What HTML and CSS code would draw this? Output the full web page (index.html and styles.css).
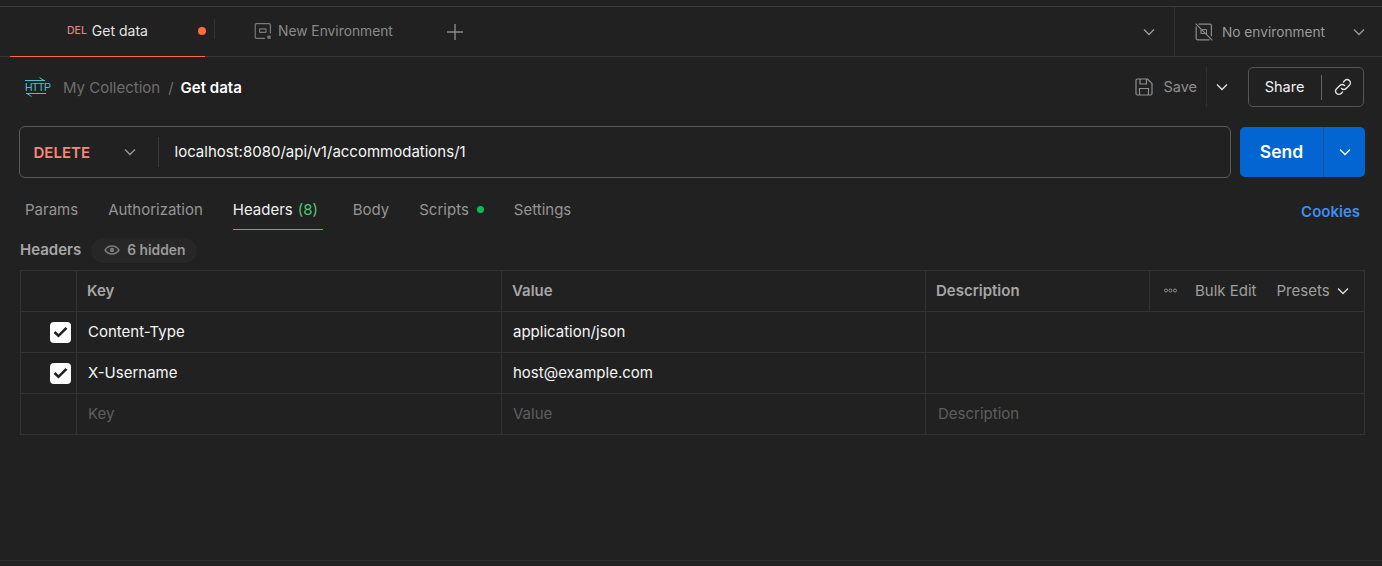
FILE: index.html
```html
<!DOCTYPE html>
<html lang="en">
<head>
<meta charset="UTF-8" />
<title>Get data</title>
<link rel="stylesheet" href="styles.css">
</head>
<body>
<div class="tabbar">
    <div class="tab tab-active">
        <span class="tab-method">DEL</span>
        <span class="tab-name">Get data</span>
        <span class="tab-dot"></span>
    </div>
    <div class="tab-env">
        <svg width="18" height="18" viewBox="0 0 18 18" fill="none" stroke="#7a7a7a" stroke-width="1.2"><path d="M11 16.4H2.6a1.4 1.4 0 0 1-1.4-1.4V3a1.4 1.4 0 0 1 1.4-1.4H15A1.4 1.4 0 0 1 16.4 3v8.5"/><rect x="5.6" y="6.8" width="6.4" height="3.6" rx="0.6"/><rect x="13.4" y="13.6" width="3.2" height="3.2" fill="#7a7a7a" stroke="none"/></svg>
        <span>New Environment</span>
    </div>
    <div class="tab-add">
        <svg width="16" height="16" viewBox="0 0 16 16" stroke="#8a8a8a" stroke-width="1.4"><path d="M8 0v16M0 8h16"/></svg>
    </div>
    <div class="tabbar-right">
        <div class="tab-more">
            <svg class="chev" width="12" height="8" viewBox="0 0 12 8"><path d="M1 1.5l5 5 5-5"/></svg>
        </div>
        <div class="env-select">
            <svg width="18" height="18" viewBox="0 0 18 18" fill="none" stroke="#8a8a8a" stroke-width="1.2"><path d="M3.5 1.2H15a1.4 1.4 0 0 1 1.4 1.4v10.6M14.6 16.8H2.6A1.4 1.4 0 0 1 1.2 15.4V3.4"/><path d="M0.6 0.6L17.4 17.4"/><rect x="6" y="6.5" width="5.5" height="4" rx="0.6"/></svg>
            <span class="env-name">No environment</span>
            <svg class="chev" width="12" height="8" viewBox="0 0 12 8"><path d="M1 1.5l5 5 5-5"/></svg>
        </div>
    </div>
</div>

<div class="toolbar">
    <div class="crumbs">
        <span class="http-icon">
            <svg width="21" height="5" viewBox="0 0 21 5" fill="none" stroke="#3cc8d8" stroke-width="1"><path d="M0 3.5h20M14.5 0.5l4.5 3"/></svg>
            <span class="http-text">HTTP</span>
            <svg width="21" height="5" viewBox="0 0 21 5" fill="none" stroke="#3cc8d8" stroke-width="1"><path d="M1 1.5h20M6.5 4.5L2 1.5"/></svg>
        </span>
        <span class="crumb-parent">My Collection</span>
        <span class="crumb-sep">/</span>
        <span class="crumb-current">Get data</span>
    </div>
    <div class="toolbar-actions">
        <div class="save">
            <svg width="18" height="18" viewBox="0 0 18 18" fill="none" stroke="#8f8f8f" stroke-width="1.2"><path d="M2.5 1H12.5L17 5.5V15.5A1.5 1.5 0 0 1 15.5 17H2.5A1.5 1.5 0 0 1 1 15.5V2.5A1.5 1.5 0 0 1 2.5 1Z"/><path d="M5 1V6H11.5V1M4.5 17V10.5H13.5V17"/></svg>
            <span class="save-label">Save</span>
        </div>
        <div class="save-more">
            <svg class="chev chev-light" width="12" height="8" viewBox="0 0 12 8"><path d="M1 1.5l5 5 5-5"/></svg>
        </div>
        <div class="share">
            <span class="share-label">Share</span>
            <span class="share-link">
                <svg width="18" height="18" viewBox="0 0 18 18" fill="none" stroke="#e0e0e0" stroke-width="1.4" stroke-linecap="round"><path d="M7.5 10.5a3.2 3.2 0 0 0 4.6 0l3.3-3.3a3.25 3.25 0 0 0-4.6-4.6L9.5 3.9"/><path d="M10.5 7.5a3.2 3.2 0 0 0-4.6 0l-3.3 3.3a3.25 3.25 0 0 0 4.6 4.6l1.3-1.3"/></svg>
            </span>
        </div>
    </div>
</div>

<div class="request">
    <div class="url-box">
        <div class="method">
            <span class="method-name">DELETE</span>
            <svg class="chev" width="12" height="8" viewBox="0 0 12 8"><path d="M1 1.5l5 5 5-5"/></svg>
        </div>
        <div class="url">localhost:8080/api/v1/accommodations/1</div>
    </div>
    <div class="send">
        <span class="send-label">Send</span>
        <span class="send-more">
            <svg class="chev chev-white" width="12" height="8" viewBox="0 0 12 8"><path d="M1 1.5l5 5 5-5"/></svg>
        </span>
    </div>
</div>

<div class="req-tabs">
    <span class="req-tab">Params</span>
    <span class="req-tab">Authorization</span>
    <span class="req-tab req-tab-active">Headers <span class="count">(8)</span></span>
    <span class="req-tab">Body</span>
    <span class="req-tab">Scripts <span class="green-dot"></span></span>
    <span class="req-tab">Settings</span>
    <span class="cookies">Cookies</span>
</div>

<div class="headers-label">
    <span class="headers-title">Headers</span>
    <span class="hidden-pill">
        <svg width="16" height="10" viewBox="0 0 16 10" fill="none" stroke="#7c7c7c" stroke-width="1.4"><path d="M1 5c1.8-2.7 4.2-4 7-4s5.2 1.3 7 4c-1.8 2.7-4.2 4-7 4S2.8 7.7 1 5z"/><circle cx="8" cy="5" r="2.2" fill="#7c7c7c" stroke="none"/></svg>
        6 hidden
    </span>
</div>

<div class="table">
    <div class="row row-head">
        <div class="cell cell-check"></div>
        <div class="cell cell-key">Key</div>
        <div class="cell cell-value">Value</div>
        <div class="cell cell-desc">Description</div>
        <div class="cell cell-tools">
            <svg width="13" height="5" viewBox="0 0 13 5" fill="none" stroke="#9a9a9a" stroke-width="0.9"><circle cx="2" cy="2.5" r="1.5"/><circle cx="6.5" cy="2.5" r="1.5"/><circle cx="11" cy="2.5" r="1.5"/></svg>
            <span class="bulk">Bulk Edit</span>
            <span class="presets">Presets
                <svg class="chev chev-light" width="12" height="8" viewBox="0 0 12 8"><path d="M1 1.5l5 5 5-5"/></svg>
            </span>
        </div>
    </div>
    <div class="row">
        <div class="cell cell-check"><span class="checkbox"><svg width="15" height="12" viewBox="0 0 15 12" fill="none" stroke="#212121" stroke-width="2.6"><path d="M1.5 6l4 3.8 8-8"/></svg></span></div>
        <div class="cell cell-key cell-text">Content-Type</div>
        <div class="cell cell-value cell-text">application/json</div>
        <div class="cell cell-wide"></div>
    </div>
    <div class="row">
        <div class="cell cell-check"><span class="checkbox"><svg width="15" height="12" viewBox="0 0 15 12" fill="none" stroke="#212121" stroke-width="2.6"><path d="M1.5 6l4 3.8 8-8"/></svg></span></div>
        <div class="cell cell-key cell-text">X-Username</div>
        <div class="cell cell-value cell-text">host@example.com</div>
        <div class="cell cell-wide"></div>
    </div>
    <div class="row">
        <div class="cell cell-check"></div>
        <div class="cell cell-key cell-text cell-empty">Key</div>
        <div class="cell cell-value cell-text cell-empty">Value</div>
        <div class="cell cell-wide cell-text cell-empty">Description</div>
    </div>
</div>

<div class="footer-line"></div>
</body>
</html>
```

FILE: styles.css
```css
/* Reset and base styles */
* {margin: 0; padding: 0; box-sizing: border-box;}
html, body {height: 100%;}
body {
    font-family: Inter, 'Noto Sans', sans-serif;
    background: #212121;
    color: #fff;
    font-size: 14px;
    height: 566px;
    overflow: hidden;
    position: relative;
    padding-top: 6px;
}
svg {display: block; flex: none;}
.chev {fill: none; stroke: #9a9a9a; stroke-width: 1.3;}
.chev-light {stroke: #e0e0e0;}
.chev-white {stroke: #fff;}

/* Top tab bar */
.tabbar {
    display: flex;
    height: 51px;
    border-top: 1px solid #3b3b3b;
    border-bottom: 1px solid #383838;
    align-items: stretch;
}
.tab {
    width: 195px;
    margin-left: 10px;
    display: flex;
    align-items: center;
    padding-left: 57px;
    padding-bottom: 2px;
    border-bottom: 1px solid #ff6c37;
    margin-bottom: -1px;
    position: relative;
}
.tab::after {
    content: "";
    position: absolute;
    right: -10px;
    top: 12px;
    height: 20px;
    width: 1px;
    background: #333;
}
.tab-method {
    font-size: 10.5px;
    font-weight: 500;
    color: #e2887f;
    margin-right: 5px;
}
.tab-name {color: #e4e4e4; font-size: 14px;}
.tab-dot {
    width: 8px;
    height: 8px;
    border-radius: 50%;
    background: #ff6c37;
    margin-left: auto;
    margin-right: -1px;
}
.tab-env {
    display: flex;
    align-items: center;
    gap: 6px;
    margin-left: 49px;
    padding-bottom: 1px;
    color: #8a8a8a;
    font-size: 13.8px;
}
.tab-add {
    display: flex;
    align-items: center;
    margin-left: 54px;
}
.tabbar-right {
    margin-left: auto;
    display: flex;
    align-items: stretch;
}
.tab-more {
    display: flex;
    align-items: center;
    padding-right: 19px;
}
.env-select {
    width: 208px;
    border-left: 1px solid #333;
    display: flex;
    align-items: center;
    padding-left: 20px;
}
.env-name {
    color: #9a9a9a;
    margin-left: 9px;
    font-size: 13.7px;
}
.env-select .chev {margin-left: auto; margin-right: 17px;}

/* Breadcrumb row */
.toolbar {
    display: flex;
    align-items: center;
    justify-content: space-between;
    height: 60px;
    padding: 0 18px 0 25px;
}
.crumbs {display: flex; align-items: center;}
.http-icon {
    display: flex;
    flex-direction: column;
    width: 21px;
    margin-right: 17px;
}
.http-text {
    font-size: 10.5px;
    line-height: 10px;
    color: #3cc8d8;
    letter-spacing: -0.5px;
    font-family: 'Liberation Sans', sans-serif;
}
.crumb-parent {color: #6e6e6e; font-size: 15px;}
.crumb-sep {color: #6e6e6e; margin: 0 7px 0 8px; font-size: 15px;}
.crumb-current {font-weight: 600; font-size: 15px;}
.toolbar-actions {display: flex; align-items: center;}
.save {
    display: flex;
    align-items: center;
    gap: 10px;
    color: #8f8f8f;
    font-size: 14.5px;
    padding: 0 9px 0 0;
    height: 40px;
    border-right: 1px solid #303030;
}
.save-label {padding-bottom: 2px;}
.save-more {
    display: flex;
    align-items: center;
    padding: 0 9px;
    margin-right: 11px;
}
.share {
    display: flex;
    align-items: center;
    height: 40px;
    width: 116px;
    border: 1px solid #555;
    border-radius: 5px;
}
.share-label {
    width: 73px;
    padding: 0 1px 2px 0;
    text-align: center;
    border-right: 1px solid #666;
    line-height: 23px;
    font-size: 14.5px;
    color: #f0f0f0;
}
.share-link {flex: 1; display: flex; justify-content: center;}

/* Method and url */
.request {
    display: flex;
    gap: 9px;
    padding: 0 17px 0 19px;
    margin-top: 9px;
}
.url-box {
    flex: 1;
    height: 52px;
    border: 1px solid #5a5a5a;
    border-radius: 6px;
    display: flex;
    align-items: center;
}
.method {
    width: 139px;
    height: 30px;
    display: flex;
    align-items: center;
    justify-content: space-between;
    padding: 0 22px 0 13.5px;
    border-right: 1px solid #3a3a3a;
}
.method-name {
    color: #f4897c;
    font-weight: 600;
    font-size: 15px;
}
.url {
    padding: 0 0 2px 15.5px;
    font-size: 15px;
    color: #f6f6f6;
}
.send {
    width: 125px;
    height: 50px;
    margin-top: 1px;
    background: #0265d2;
    border-radius: 5px;
    display: flex;
    align-items: stretch;
}
.send-label {
    width: 84px;
    padding-bottom: 2px;
    font-weight: 600;
    font-size: 17.5px;
    display: flex;
    align-items: center;
    justify-content: center;
    border-right: 1px solid #1c4f8c;
}
.send-more {flex: 1; display: flex; align-items: center; justify-content: center;}

/* Request tabs */
.req-tabs {
    display: flex;
    align-items: stretch;
    height: 43px;
    margin-top: 9px;
    padding: 0 22px 0 25px;
    gap: 30px;
}
.req-tab {
    color: #959595;
    font-size: 15px;
    display: flex;
    align-items: center;
    gap: 5px;
    padding-top: 3px;
    height: 43px;
    border-bottom: 1px solid transparent;
}
.req-tab-active {
    color: #f0f0f0;
    border-bottom-color: #ff6c37;
    width: 90px;
}
.count {color: #4fc67a;}
.green-dot {
    width: 7px;
    height: 7px;
    border-radius: 50%;
    background: #0cbb52;
    margin-left: 3px;
}
.cookies {
    margin-left: auto;
    color: #3f8ef0;
    font-weight: 600;
    font-size: 15px;
    display: flex;
    align-items: center;
    padding-top: 5px;
}

/* Headers label */
.headers-label {
    display: flex;
    align-items: center;
    height: 26px;
    margin-top: 7px;
    padding-left: 20px;
}
.headers-title {
    color: #a6a6a6;
    font-weight: 600;
    font-size: 15px;
    margin-right: 10px;
    padding-bottom: 2px;
}
.hidden-pill {
    display: flex;
    align-items: center;
    gap: 7px;
    height: 25px;
    padding: 0 12px 1px 13px;
    border-radius: 13px;
    background: #272727;
    color: #9a9a9a;
    font-weight: 600;
    font-size: 13.8px;
}

/* Headers table */
.table {
    margin: 7px 17px 0 20px;
    border: 1px solid #333;
    border-bottom: 0;
}
.row {
    display: grid;
    grid-template-columns: 56px 425px 424px 1fr;
    height: 41px;
    border-bottom: 1px solid #333;
}
.row-head {grid-template-columns: 56px 425px 424px 224px 1fr;}
.cell {
    display: flex;
    align-items: center;
    border-right: 1px solid #333;
    padding-left: 10px;
    padding-bottom: 1px;
    font-size: 15px;
}
.cell:last-child {border-right: 0;}
.row-head .cell {color: #a6a6a6; font-weight: 600;}
.row-head .cell-tools {
    font-weight: 400;
    padding-left: 14px;
    color: #9f9f9f;
}
.cell-check {padding: 0 5px 0 0; justify-content: flex-end;}
.cell-text {padding-left: 11px; padding-bottom: 2px; color: #f6f6f6;}
.cell-empty {color: #5e5e5e;}
.cell-wide.cell-text {padding-left: 12px;}
.checkbox {
    width: 21px;
    height: 21px;
    border-radius: 4px;
    background: #fff;
    display: flex;
    align-items: center;
    justify-content: center;
}
.bulk {margin-left: 18px;}
.presets {
    margin-left: 20px;
    display: flex;
    align-items: center;
    gap: 7px;
}

.footer-line {
    position: absolute;
    left: 0;
    right: 0;
    bottom: 5px;
    height: 1px;
    background: #2e2e2e;
}
```
